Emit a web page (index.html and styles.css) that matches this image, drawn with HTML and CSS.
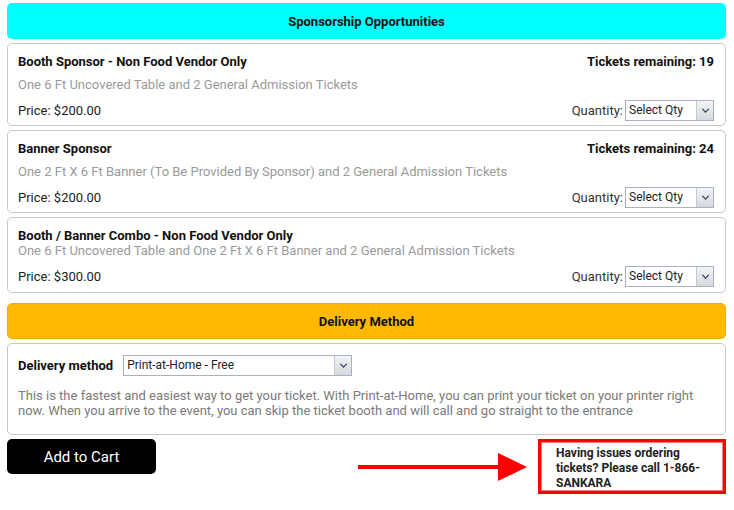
FILE: index.html
```html
<!DOCTYPE html>
<html>
<head>
<meta charset="utf-8">
<link rel="stylesheet" href="styles.css">
</head>
<body>
<div class="page">
  <div class="section-head cyan">Sponsorship Opportunities</div>

  <div class="card">
    <div class="row">
      <div class="title">Booth Sponsor - Non Food Vendor Only</div>
      <div class="remaining">Tickets remaining: 19</div>
    </div>
    <div class="desc">One 6 Ft Uncovered Table and 2 General Admission Tickets</div>
    <div class="row price-row">
      <div class="price">Price: $200.00</div>
      <div class="qty"><span class="qty-label">Quantity:</span>
        <div class="fake-select qty-select"><span class="sel-text">Select Qty</span><span class="sel-btn"><svg width="9" height="6" viewBox="0 0 9 6"><path d="M0.5 0.8 L2 0.8 L4.5 3.2 L7 0.8 L8.5 0.8 L4.5 5 Z" fill="#2b3f6e"/></svg></span></div>
      </div>
    </div>
  </div>

  <div class="card">
    <div class="row">
      <div class="title">Banner Sponsor</div>
      <div class="remaining">Tickets remaining: 24</div>
    </div>
    <div class="desc">One 2 Ft X 6 Ft Banner (To Be Provided By Sponsor) and 2 General Admission Tickets</div>
    <div class="row price-row">
      <div class="price">Price: $200.00</div>
      <div class="qty"><span class="qty-label">Quantity:</span>
        <div class="fake-select qty-select"><span class="sel-text">Select Qty</span><span class="sel-btn"><svg width="9" height="6" viewBox="0 0 9 6"><path d="M0.5 0.8 L2 0.8 L4.5 3.2 L7 0.8 L8.5 0.8 L4.5 5 Z" fill="#2b3f6e"/></svg></span></div>
      </div>
    </div>
  </div>

  <div class="card card-last">
    <div class="row">
      <div class="title">Booth / Banner Combo - Non Food Vendor Only</div>
    </div>
    <div class="desc tight">One 6 Ft Uncovered Table and One 2 Ft X 6 Ft Banner and 2 General Admission Tickets</div>
    <div class="row price-row">
      <div class="price">Price: $300.00</div>
      <div class="qty"><span class="qty-label">Quantity:</span>
        <div class="fake-select qty-select"><span class="sel-text">Select Qty</span><span class="sel-btn"><svg width="9" height="6" viewBox="0 0 9 6"><path d="M0.5 0.8 L2 0.8 L4.5 3.2 L7 0.8 L8.5 0.8 L4.5 5 Z" fill="#2b3f6e"/></svg></span></div>
      </div>
    </div>
  </div>

  <div class="section-head orange">Delivery Method</div>

  <div class="card delivery">
    <div class="delivery-row">
      <span class="delivery-label">Delivery method</span>
      <div class="fake-select delivery-select"><span class="sel-text">Print-at-Home - Free</span><span class="sel-btn"><svg width="9" height="6" viewBox="0 0 9 6"><path d="M0.5 0.8 L2 0.8 L4.5 3.2 L7 0.8 L8.5 0.8 L4.5 5 Z" fill="#2b3f6e"/></svg></span></div>
    </div>
    <p class="delivery-desc">This is the fastest and easiest way to get your ticket. With Print-at-Home, you can print your ticket on your printer right now. When you arrive to the event, you can skip the ticket booth and will call and go straight to the entrance</p>
  </div>

  <div class="bottom">
    <button class="cart-btn">Add to Cart</button>
    <svg class="arrow" width="170" height="30" viewBox="0 0 170 30"><rect x="0" y="12" width="145" height="4" fill="#f00"/><path d="M140 0 L169 14 L140 28 Z" fill="#f00"/></svg>
    <div class="help-box"><div class="help-inner">Having issues ordering tickets? Please call 1-866-SANKARA</div></div>
  </div>
</div>
</body>
</html>
```

FILE: styles.css
```css
* { box-sizing: border-box; }
html, body { background: #fff; }
body {
  margin: 0;
  padding: 3px 8px 0 7px;
  font-family: Roboto, "Liberation Sans", sans-serif;
  font-size: 13px;
  color: #111;
}
.page { display: flex; flex-direction: column; gap: 4px; }

.section-head {
  height: 36px;
  border-radius: 5px;
  display: flex;
  align-items: center;
  justify-content: center;
  font-weight: bold;
  font-size: 13px;
  color: #111;
}
.cyan { background: #00ffff; }
.orange { background: #ffb900; margin-top: 6px; border: 1px solid #eab000; }

.card {
  border: 1px solid #c8c8c8;
  border-radius: 5px;
  padding: 9px 11px 4px 10px;
}
.card-last { padding-bottom: 5px; }
.row {
  display: flex;
  justify-content: space-between;
  align-items: center;
  line-height: 18px;
}
.title { font-weight: bold; color: #111; }
.remaining { font-weight: bold; color: #111; }
.desc {
  color: #9a9a9a;
  line-height: 18px;
  margin-top: 5px;
}
.desc.tight { margin-top: -3px; }
.price-row { margin-top: 6px; }
.price { color: #222; }
.qty { display: flex; align-items: center; gap: 2px; }
.qty-label { color: #333; }

.fake-select {
  display: flex;
  height: 21px;
  border: 1px solid #a9b0c4;
  background: #fff;
  font-size: 12px;
  color: #222;
}
.sel-text {
  flex: 1;
  padding-left: 3px;
  line-height: 19px;
  white-space: nowrap;
}
.sel-btn {
  width: 17px;
  display: flex;
  align-items: center;
  justify-content: center;
  background: linear-gradient(#f2f3f5, #d7d9dd);
  border-left: 1px solid #c5c9d3;
}
.qty-select { width: 89px; }

.delivery { padding: 11px 11px 16px 10px; }
.delivery-row { display: flex; align-items: center; gap: 10px; }
.delivery-label { font-weight: bold; color: #111; }
.delivery-select { width: 229px; }
.delivery-desc {
  margin: 12px 0 0;
  color: #7a7a7a;
  line-height: 15px;
}

.bottom {
  display: flex;
  align-items: flex-start;
}
.cart-btn {
  width: 149px;
  height: 35px;
  background: #000;
  color: #fff;
  border: none;
  border-radius: 5px;
  font-family: Roboto, "Liberation Sans", sans-serif;
  font-size: 15px;
}
.arrow { margin-left: auto; margin-top: 14px; margin-right: 10px; }
.help-box {
  width: 188px;
  height: 55px;
  border: 3px solid #f00;
}
.help-inner {
  height: 100%;
  border: 1px solid #ff8080;
  padding: 3px 6px 0 14px;
  font-size: 12px;
  font-weight: bold;
  line-height: 15px;
  color: #222;
}
```
